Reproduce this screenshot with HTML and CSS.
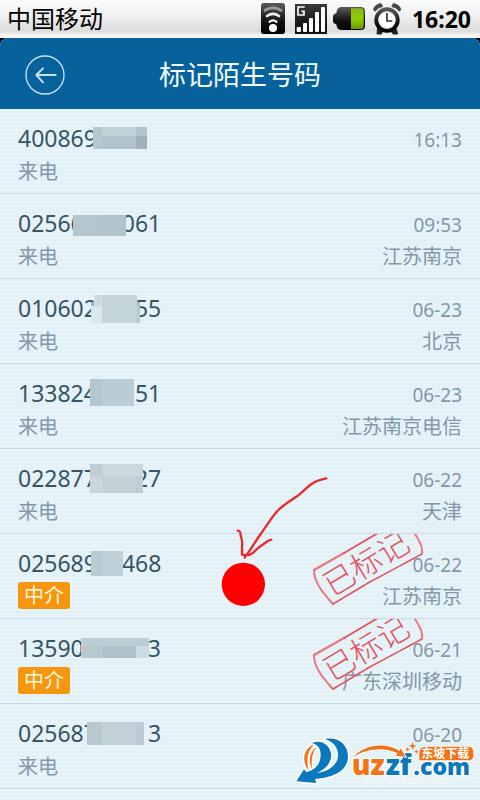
FILE: index.html
```html
<!DOCTYPE html>
<html lang="zh-CN">
<head>
<meta charset="utf-8">
<meta name="viewport" content="width=device-width, initial-scale=1">
<title>标记陌生号码</title>
<link rel="stylesheet" href="styles.css">
</head>
<body>
<svg class="defs" aria-hidden="true">
  <defs>
    <linearGradient id="dark" x1="0" y1="0" x2="0" y2="1"><stop offset="0" stop-color="#5a5a5a"/><stop offset=".6" stop-color="#111"/><stop offset="1" stop-color="#000"/></linearGradient>
    <linearGradient id="green" x1="0" y1="0" x2="0" y2="1"><stop offset="0" stop-color="#8ab514"/><stop offset=".5" stop-color="#8fce00"/><stop offset="1" stop-color="#679a00"/></linearGradient>
    <symbol id="stamp" viewBox="0 0 120 72">
      <g fill="none" stroke="#ec7680" stroke-linecap="round">
        <path stroke-width="2.4" d="M6 36L36 19"/>
        <path stroke-width="1.8" stroke="#e4505a" d="M36 19L70 -1"/>
        <path stroke-width="2" stroke-dasharray="9 1 5 1.5" d="M6 36C6 47 13 57 25 70"/>
        <path stroke-width="1.6" stroke="#e4505a" stroke-dasharray="12 1 6 1 17 1.5" d="M25 70L60 49L114 20"/>
        <path stroke-width="2" stroke-dasharray="6 1.5" d="M107 0C111 7 115 12 114 20"/>
      </g>
      <text class="stamp-text" transform="translate(24 63) rotate(-31)">已标记</text>
    </symbol>
  </defs>
</svg>

<div class="status">
  <span class="carrier">中国移动</span>
  <svg class="status-icons" viewBox="30 0 432 114" aria-hidden="true">
    <rect x="33" y="9" width="72" height="93" rx="8" fill="url(#dark)"/>
    <circle cx="69" cy="84" r="12" fill="#fff"/>
    <g fill="none" stroke-linecap="round">
      <path d="M59 65Q69 57 79 65" stroke="#fff" stroke-width="7"/>
      <path d="M51 48Q69 35 87 48" stroke="#eee" stroke-width="8"/>
      <path d="M45 31Q69 16 93 31" stroke="#999" stroke-width="9"/>
    </g>
    <rect x="135" y="12" width="96" height="90" fill="url(#dark)"/>
    <rect x="135" y="12" width="96" height="90" fill="#222" opacity=".55"/>
    <path d="M164 21H144V45H162V34H154" fill="none" stroke="#fff" stroke-width="5"/>
    <g fill="#fff"><rect x="140" y="81" width="13" height="15" rx="3"/><rect x="159" y="69" width="12" height="27" rx="3"/><rect x="177" y="54" width="12" height="42" rx="3"/><rect x="195" y="36" width="12" height="60" rx="3"/><rect x="213" y="21" width="12" height="75" rx="3"/></g>
    <path d="M272 21H333Q345 21 345 34V78Q345 90 333 90H272Q260 88 259 73Q249 71 249 63V51Q249 42 259 40Q260 24 272 21Z" fill="url(#dark)"/>
    <path d="M303 25H332Q341 25 341 35V77Q341 87 332 87H303Z" fill="url(#green)"/>
    <path d="M383 82L381 102H394L398 93M437 82L443 102H429L423 93" fill="#222" stroke="#222" stroke-width="3"/>
    <path d="M370 29Q374 14 393 10L398 20Q382 22 376 34ZM453 29Q449 14 430 10L425 20Q441 22 447 34Z" fill="#444" stroke="#444" stroke-width="2"/>
    <circle cx="411" cy="60" r="32" fill="#fff" stroke="url(#dark)" stroke-width="12"/>
    <circle cx="411" cy="60" r="25" fill="none" stroke="#ccc" stroke-width="2"/>
    <path d="M411 39V63H427" fill="none" stroke="#333" stroke-width="5"/>
  </svg>
  <time class="clock">16:20</time>
</div>

<div class="app">
  <header class="header">
    <button class="back" aria-label="返回">
      <svg viewBox="0 0 120 120" aria-hidden="true"><circle cx="60" cy="60" r="57" fill="none" stroke="#c5e1f5" stroke-width="4"/><path d="M92 60H34M54 40L34 60L54 82" fill="none" stroke="#c5e1f5" stroke-width="6" stroke-linecap="round" stroke-linejoin="round"/></svg>
    </button>
    <h1>标记陌生号码</h1>
  </header>

  <ul class="calls">
    <li class="call">
      <div class="main"><span class="phone">400869</span><span class="type">来电</span></div>
      <div class="meta"><time>16:13</time></div>
      <svg class="mask" viewBox="0 0 240 84" aria-hidden="true"><path fill="#b5c8d0" d="M93 18h9v22h-9z"/><path fill="#c2d2d9" d="M102 18h34v9h-34z"/><path fill="#b1c3cc" d="M102 27h34v13h-34zM136 18h11v9h-11z"/><path fill="#9fb2bb" d="M136 27h11v13h-11z"/></svg>
    </li>
    <li class="call">
      <div class="main"><span class="phone">02566<i class="gap3"></i>061</span><span class="type">来电</span></div>
      <div class="meta"><time>09:53</time><span class="place">江苏南京</span></div>
      <svg class="mask" viewBox="0 0 240 84" aria-hidden="true"><path fill="#b4c7ce" d="M73 21h29v21h-29z"/><path fill="#b1c3cb" d="M102 21h24v21h-24z"/></svg>
    </li>
    <li class="call">
      <div class="main"><span class="phone">010602<i class="gap3"></i>55</span><span class="type">来电</span></div>
      <div class="meta"><time>06-23</time><span class="place">北京</span></div>
      <svg class="mask" viewBox="0 0 240 84" aria-hidden="true"><path fill="#cddce2" d="M94 16h8v11h-8z"/><path fill="#c6d5dc" d="M102 16h35v11h-35z"/><path fill="#a2b8c1" d="M91 23h3v4h-3zM137 23h3v4h-3z"/><path fill="#dbe7ed" d="M91 27h11v17h-11z"/><path fill="#c3d4db" d="M102 27h35v17h-35z"/><path fill="#b5c7cf" d="M137 27h3v17h-3z"/></svg>
    </li>
    <li class="call">
      <div class="main"><span class="phone">133824<i class="gap3"></i>51</span><span class="type">来电</span></div>
      <div class="meta"><time>06-23</time><span class="place">江苏南京电信</span></div>
      <svg class="mask" viewBox="0 0 240 84" aria-hidden="true"><path fill="#b4c6ce" d="M90 15h12v27h-12z"/><path fill="#baccd4" d="M102 15h32v27h-32z"/></svg>
    </li>
    <li class="call">
      <div class="main"><span class="phone">022877<i class="gap3"></i>27</span><span class="type">来电</span></div>
      <div class="meta"><time>06-22</time><span class="place">天津</span></div>
      <svg class="mask" viewBox="0 0 240 84" aria-hidden="true"><path fill="#bdced5" d="M90 15h12v12h-12zM136 27h7v17h-7z"/><path fill="#cad9df" d="M102 15h41v12h-41z"/><path fill="#c8d6de" d="M90 27h12v17h-12z"/><path fill="#c3d2d9" d="M102 27h34v17h-34z"/></svg>
    </li>
    <li class="call">
      <div class="main"><span class="phone">025689<i class="gap2"></i>468</span><span class="tag">中介</span></div>
      <div class="meta"><time>06-22</time><span class="place">江苏南京</span></div>
      <svg class="mask" viewBox="0 0 240 84" aria-hidden="true"><path fill="#b9cbd2" d="M91 17h11v25h-11z"/><path fill="#bfd0d6" d="M102 17h21v25h-21z"/></svg>
      <svg class="stamp" aria-hidden="true"><use href="#stamp"/></svg>
      <svg class="pointer" viewBox="0 0 450 480" aria-hidden="true">
        <circle cx="130" cy="373" r="65" fill="#f00"/>
        <path d="M379 55C364 58 350 62 338 70C320 82 306 98 291 109C270 123 248 136 232 153C212 176 196 203 182 222C164 248 149 273 134 293M113 212Q122 211 122 227Q128 242 126 260V284Q148 289 160 278Q174 262 191 252Q204 241 214 239" fill="none" stroke="#e92830" stroke-width="7" stroke-linecap="round" stroke-linejoin="round"/>
      </svg>
    </li>
    <li class="call">
      <div class="main"><span class="phone">13590<i class="gap5"></i>3</span><span class="tag">中介</span></div>
      <div class="meta"><time>06-21</time><span class="place">广东深圳移动</span></div>
      <svg class="mask" viewBox="0 0 240 84" aria-hidden="true"><path fill="#bccdd4" d="M81 19h68v8h-68z"/><path fill="#b8c9d0" d="M81 27h21v12h-21z"/><path fill="#afc1ca" d="M102 27h34v12h-34z"/><path fill="#cddae2" d="M136 27h13v12h-13z"/></svg>
      <svg class="stamp" aria-hidden="true"><use href="#stamp"/></svg>
    </li>
    <li class="call">
      <div class="main"><span class="phone">025687<i class="gap4"></i>3</span><span class="type">来电</span></div>
      <div class="meta"><time>06-20</time></div>
      <svg class="mask" viewBox="0 0 240 84" aria-hidden="true"><path fill="#b7c8cf" d="M87 18h15v23h-15z"/><path fill="#c3d2d9" d="M102 18h34v23h-34z"/><path fill="#bbccd4" d="M136 18h8v23h-8z"/></svg>
      <svg class="brand" viewBox="30 45 570 165" role="img" aria-label="uzzf.com">
        <g stroke="#fff" stroke-width="9" stroke-linejoin="round" paint-order="stroke">
          <path fill="#f47216" d="M104 72C72 84 62 120 86 152C78 120 82 92 104 72ZM110 82C88 96 84 124 96 148C93 122 96 100 110 82Z"/>
          <path fill="#0b78bd" d="M49 184L72 148L79 156C110 151 128 122 120 90C116 78 108 72 96 69C124 57 148 74 153 100C156 125 140 147 110 159C148 154 173 133 174 107C175 83 161 65 134 57C175 49 205 74 204 112C202 151 164 173 105 177L109 189Z"/>
        </g>
        <text class="brand-faint" x="250" y="192">jingyan.baidu.com</text>
        <g class="brand-text">
          <text x="400" y="165" class="brand-com">.com</text>
          <text x="317" y="165" class="brand-zf">zf</text>
          <text x="215" y="165" class="brand-uz">uz</text>
        </g>
        <path fill="#f47216" stroke="#fff" stroke-width="5" paint-order="stroke" d="M219 112C255 71 320 67 358 93L362 85L377 110L347 107L353 100C314 80 258 84 219 112Z"/>
        <path fill="#f47216" d="M398 66l3 9 9 3-9 3-3 9-3-9-9-3 9-3zM383 81l2 5 5 2-5 2-2 5-2-5-5-2 5-2zM409 88l2 5 5 2-5 2-2 5-2-5-5-2 5-2z"/>
        <path fill="#f47216" stroke="#fff" stroke-width="4" paint-order="stroke" d="M436 80H564Q580 80 580 94V107Q580 121 564 121H418V98Q420 80 436 80Z"/>
        <text class="brand-label" x="424" y="115">东坡下载</text>
      </svg>
    </li>
  </ul>
</div>
</body>
</html>
```
FILE: styles.css
```css
* {
  box-sizing: border-box;
}

body {
  margin: 0;
  min-height: 100vh;
  display: flex;
  flex-direction: column;
  background: #000;
  font-family: "Noto Sans", "Noto Sans CJK SC", sans-serif;
  overflow-x: hidden;
}

.defs {
  position: absolute;
  width: 0;
  height: 0;
}

.status {
  display: flex;
  align-items: center;
  height: 38px;
  padding: 0 9px 0 7px;
  background: linear-gradient(#f8fcf8, #f4f4f4 30%, #dcdcdc 82%, #f6f6f6 94%);
  color: #000;
}

.carrier {
  flex: 1;
  font-size: 24px;
  line-height: 38px;
}

.status-icons {
  width: 144px;
  height: 38px;
  margin-right: 8px;
}

.clock {
  font-size: 23px;
  font-weight: 700;
  line-height: 38px;
}

.app {
  flex: 1;
  border-radius: 8px 8px 0 0;
  overflow: hidden;
  background-color: #e6f3f9;
  background-image: radial-gradient(#e0eef5 1px, transparent 1px);
  background-size: 4px 4px;
}

.header {
  display: grid;
  grid-template-columns: 40px 1fr 40px;
  align-items: center;
  height: 71px;
  padding: 2px 25px 0;
  background: #07629b;
}

.back {
  width: 40px;
  height: 40px;
  padding: 0;
  border: 0;
  background: none;
}

.back svg {
  display: block;
}

h1 {
  margin: 0;
  color: #f2fbff;
  font-size: 27px;
  font-weight: 400;
  line-height: 40px;
  text-align: center;
}

.calls {
  margin: 0;
  padding: 0;
  list-style: none;
}

.call {
  position: relative;
  display: flex;
  justify-content: space-between;
  min-height: 85px;
  padding: 12px 18px 4px;
  border-bottom: 1px solid #c8daea;
}

.main,
.meta {
  display: flex;
  flex-direction: column;
}

.main {
  align-items: flex-start;
}

.meta {
  align-items: flex-end;
  color: #8498a7;
}

.phone {
  color: #375563;
  font-size: 23px;
  line-height: 34px;
}

.gap2,
.gap3,
.gap4,
.gap5 {
  display: inline-block;
}

.gap2 { width: 25px; }
.gap3 { width: 38px; }
.gap4 { width: 51px; }
.gap5 { width: 64px; }

.type,
.place {
  font-size: 20px;
}

.type {
  color: #8498a7;
  line-height: 34px;
}

.place {
  line-height: 26px;
}

.meta time {
  font-size: 19px;
  line-height: 38px;
}

.tag {
  margin-top: 2px;
  padding: 0 6px;
  border-radius: 3px;
  background: #f6960f;
  color: #fff8dc;
  font-size: 20px;
  line-height: 27px;
}

.mask {
  position: absolute;
  top: 0;
  left: 0;
  width: 240px;
  height: 84px;
}

.stamp {
  position: absolute;
  top: 0;
  right: 52px;
  width: 120px;
  height: 72px;
}

.stamp-text {
  font-family: "Noto Sans CJK SC", sans-serif;
  font-size: 31px;
  font-weight: 300;
  fill: #e4505c;
}

.pointer {
  position: absolute;
  top: -74px;
  left: 200px;
  width: 150px;
  height: 160px;
}

.brand {
  position: absolute;
  right: 0;
  bottom: -2px;
  width: 190px;
  height: 55px;
}

.brand-text {
  font-family: "Open Sans", sans-serif;
  font-size: 84px;
  font-weight: 800;
  stroke: #fff;
  stroke-width: 8px;
  stroke-linejoin: round;
  paint-order: stroke;
}

.brand-uz {
  fill: #f47216;
}

.brand-zf {
  fill: #0b78bd;
}

.brand-com {
  fill: #0b78bd;
  font-size: 69px;
}

.brand-label {
  font-family: "Noto Sans CJK SC", sans-serif;
  font-size: 36px;
  font-weight: 700;
  fill: #fff;
}

.brand-faint {
  font-family: "Liberation Sans", sans-serif;
  font-size: 33px;
  fill: #fff;
  opacity: 0.6;
}
```
